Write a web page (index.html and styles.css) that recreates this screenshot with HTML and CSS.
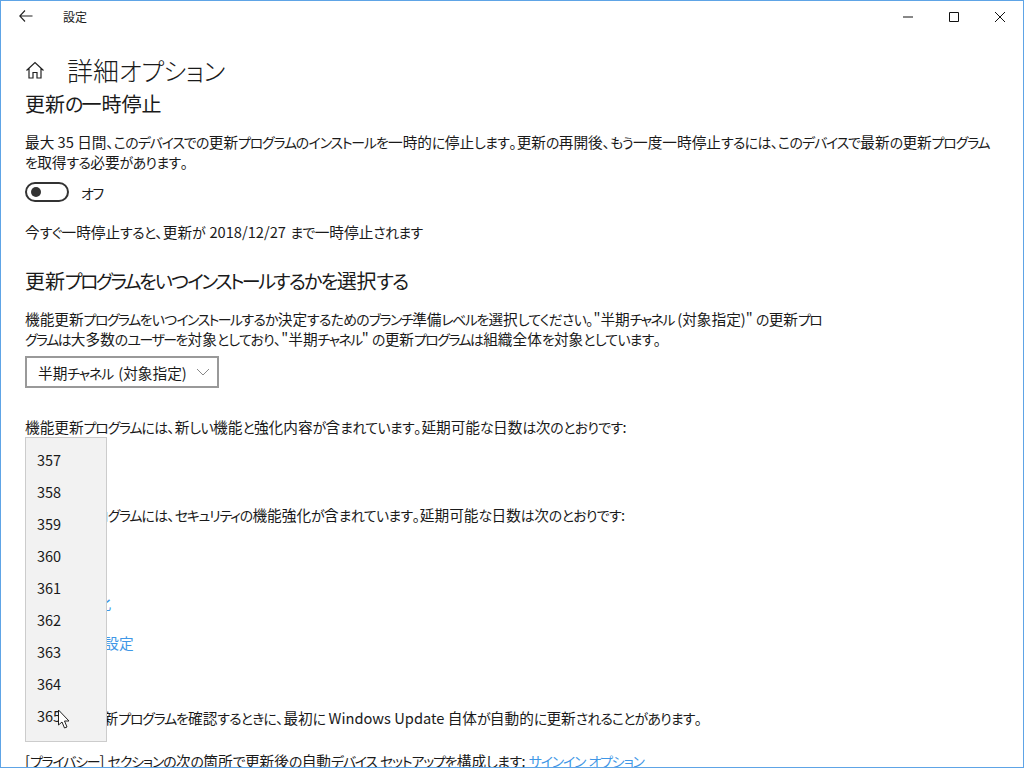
FILE: index.html
```html
<!DOCTYPE html>
<html lang="ja">
<head>
<meta charset="utf-8">
<title>設定</title>
<link rel="stylesheet" href="styles.css">
</head>
<body>
<div class="window">
  <header class="titlebar">
    <svg class="back" width="14" height="12" viewBox="0 0 14 12"><path d="M6 .5.8 6 6 11.500M.8 6H13.500" fill="none" stroke="#222" stroke-width="1.1"/></svg>
    <span class="apptitle">設定</span>
    <div class="controls">
      <svg width="46" height="30" viewBox="0 0 46 30"><path d="M18 16h10" stroke="#111" fill="none"/></svg>
      <svg width="46" height="30" viewBox="0 0 46 30"><path d="M18.5 11.500h9v9h-9z" stroke="#111" fill="none"/></svg>
      <svg width="46" height="30" viewBox="0 0 46 30"><path d="M18 11l10 10M28 11l-10 10" stroke="#111" fill="none"/></svg>
    </div>
  </header>
  <main class="content">
    <div class="pagehead">
      <svg class="home" width="20" height="20" viewBox="0 0 20 20"><path d="M1.500 10.500 10 2.500l8.500 8M4 8.500V18h4v-5.500h4V18h4V8.500" fill="none" stroke="#222" stroke-width="1.200"/></svg>
      <h1>詳細オプション</h1>
    </div>
    <h2 class="first">更新の一時停止</h2>
    <p class="para">最大 35 日間、このデバイスでの更新プログラムのインストールを一時的に停止します。更新の再開後、もう一度一時停止するには、このデバイスで最新の更新プログラム<br>を取得する必要があります。</p>
    <div class="toggle"><span class="switch"><span class="knob"></span></span><span>オフ</span></div>
    <p class="note">今すぐ一時停止すると、更新が 2018/12/27 まで一時停止されます</p>
    <h2 class="second">更新プログラムをいつインストールするかを選択する</h2>
    <p class="para narrow">機能更新プログラムをいつインストールするか決定するためのブランチ準備レベルを選択してください。"半期チャネル (対象指定)" の更新プロ<br>グラムは大多数のユーザーを対象としており、"半期チャネル" の更新プログラムは組織全体を対象としています。</p>
    <div class="select"><span>半期チャネル (対象指定)</span><svg width="14" height="8" viewBox="0 0 14 8"><path d="M1 1l6 6 6-6" fill="none" stroke="#888"/></svg></div>
    <p class="feature">機能更新プログラムには、新しい機能と強化内容が含まれています。延期可能な日数は次のとおりです:</p>
    <p class="quality">品質更新プログラムには、セキュリティの機能強化が含まれています。延期可能な日数は次のとおりです:</p>
    <a class="link l1">配信の最適化</a>
    <a class="link l2">プライバシーの設定</a>
    <p class="update">注意: 他の更新プログラムを確認するときに、最初に Windows Update 自体が自動的に更新されることがあります。</p>
    <p class="privacy">[プライバシー] セクションの次の箇所で更新後の自動デバイス セットアップを構成します: <a class="inline">サインイン オプション</a></p>
  </main>
  <ul class="menu">
    <li>357</li><li>358</li><li>359</li><li>360</li><li>361</li><li>362</li><li>363</li><li>364</li><li>365</li>
  </ul>
  <svg class="cursor" width="14" height="22" viewBox="0 0 14 22"><path d="M1.500 1v15l3.500-3 2.500 6 2.500-1-2.500-6h4.500z" fill="#fff" stroke="#222" stroke-width="1"/></svg>
</div>
<script src="script.js"></script>
</body>
</html>
```
FILE: styles.css
```css
* { box-sizing: border-box; }
html, body { margin: 0; padding: 0; }
body { width: 1024px; height: 768px; overflow: hidden; background: #fff; }
.window {
  position: relative; width: 1024px; height: 768px; overflow: hidden;
  border: 1px solid #5ea4e6;
  font-family: "Noto Sans CJK JP", "Noto Sans", sans-serif; font-size: 14.67px; color: #1a1a1a; background: #fff;
  font-feature-settings: "palt"; white-space: nowrap;
}
.hira, .kata { font-size: .95em; line-height: 1; }
.hira { letter-spacing: -.047em; }
.kata { letter-spacing: -.085em; }
h1 .kata { letter-spacing: -.022em; }
h2 .hira { letter-spacing: -.09em; }
h2 .kata { letter-spacing: -.135em; }
.narrow .kata { letter-spacing: -.11em; }
.narrow .hira { letter-spacing: -.055em; }
.l2 .kata { letter-spacing: -.12em; }
.update .hira { letter-spacing: -.06em; }
.titlebar { display: flex; align-items: center; height: 30px; padding-left: 18px; }
.back { margin-right: 30px; }
.apptitle { font-size: 12px; }
.controls { margin-left: auto; display: flex; }
.controls svg { display: block; }
.content { padding: 0 24px; }
.pagehead { display: flex; align-items: center; gap: 22px; height: 40px; margin-top: 19px; }
h1 { margin: 0; font-size: 26px; font-weight: 300; line-height: 40px; }
h2 { margin: 0; font-size: 20px; font-weight: 400; line-height: 28px; }
p { margin: 0; line-height: 20px; }
.para { margin-top: 14px; }
.narrow { margin-top: 14px; }
.toggle { display: flex; align-items: center; gap: 12px; margin-top: 10px; height: 20px; }
.switch { display: flex; align-items: center; width: 44px; height: 20px; border: 2px solid #333; border-radius: 10px; padding-left: 4px; }
.knob { width: 10px; height: 10px; border-radius: 50%; background: #333; }
.note { margin-top: 20px; word-spacing: 1px; }
h2.second { margin-top: 25px; }
.select { display: flex; align-items: center; justify-content: space-between; width: 194px; height: 32px; margin-top: 7px; padding: 0 7px 0 11px; border: 2px solid #999; word-spacing: 2px; }
.feature { margin-top: 29px; }
.quality { margin-top: 68px; }
.link { display: block; color: #3f97e6; }
.l1 { margin-top: 68px; line-height: 20px; }
.l2 { margin-top: 20px; line-height: 20px; }
.update { margin-top: 55px; }
.privacy { margin-top: 23px; }
.inline { color: #3f97e6; }
.menu {
  position: absolute; left: 24px; top: 436px; width: 82px; height: 305px; margin: 0; padding: 7px 0 0 11px; list-style: none;
  background: #f2f2f2; border: 1px solid #ccc;
}
.menu li { height: 32px; line-height: 30px; font-size: 14.500px; }
.cursor { position: absolute; left: 56px; top: 708px; }
```
FILE: script.js
```js
// Yu Gothic UI sets kana much narrower than kanji; mimic that by sizing kana runs.
var walker = document.createTreeWalker(document.querySelector('.content'), NodeFilter.SHOW_TEXT);
var nodes = [];
while (walker.nextNode()) nodes.push(walker.currentNode);
nodes.forEach(function (node) {
  var parts = node.nodeValue.split(/([\u3041-\u309f]+|[\u30a0-\u30ff]+)/);
  if (parts.length < 2) return;
  var frag = document.createDocumentFragment();
  parts.forEach(function (part) {
    if (!part) return;
    if (/^[\u3041-\u309f]/.test(part) || /^[\u30a0-\u30ff]/.test(part)) {
      var span = document.createElement('span');
      span.className = /^[\u3041-\u309f]/.test(part) ? 'hira' : 'kata';
      span.textContent = part;
      frag.appendChild(span);
    } else {
      frag.appendChild(document.createTextNode(part));
    }
  });
  node.parentNode.replaceChild(frag, node);
});
```
